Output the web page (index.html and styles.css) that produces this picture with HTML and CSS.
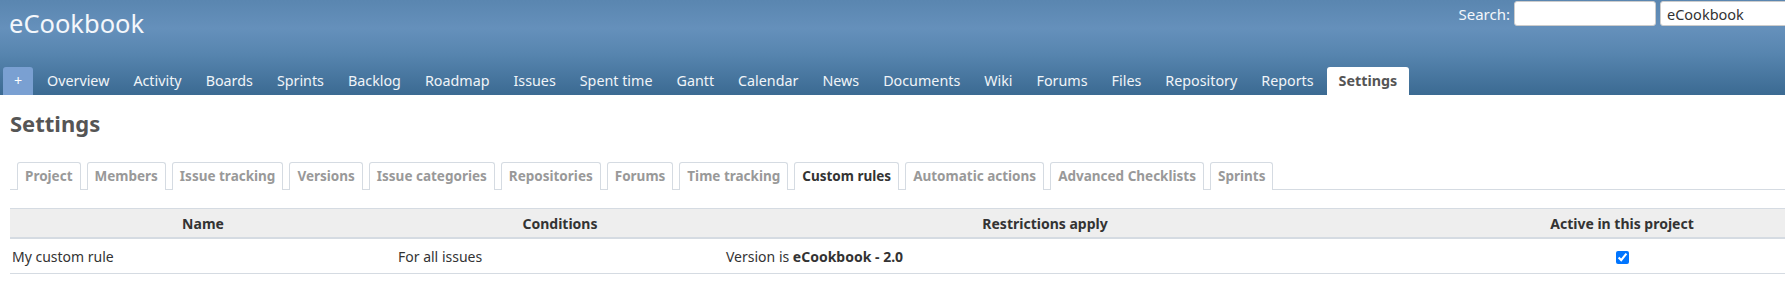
FILE: index.html
```html
<!DOCTYPE html>
<html>
<head>
<meta charset="utf-8">
<title>Settings - eCookbook</title>
<link rel="stylesheet" href="styles.css">
</head>
<body>
<div class="page">
  <header class="top">
    <div class="title-row">
      <h1 class="site-title">eCookbook</h1>
      <div class="quick-search">
        <label class="search-label" for="q">Search:</label>
        <input class="search-input" id="q" type="text">
        <select class="project-select"><option>eCookbook</option></select>
      </div>
    </div>
    <nav class="main-menu">
      <ul class="menu-list">
        <li class="menu-new">+</li>
        <li class="menu-item">Overview</li>
        <li class="menu-item">Activity</li>
        <li class="menu-item">Boards</li>
        <li class="menu-item">Sprints</li>
        <li class="menu-item">Backlog</li>
        <li class="menu-item">Roadmap</li>
        <li class="menu-item">Issues</li>
        <li class="menu-item">Spent time</li>
        <li class="menu-item">Gantt</li>
        <li class="menu-item">Calendar</li>
        <li class="menu-item">News</li>
        <li class="menu-item">Documents</li>
        <li class="menu-item">Wiki</li>
        <li class="menu-item">Forums</li>
        <li class="menu-item">Files</li>
        <li class="menu-item">Repository</li>
        <li class="menu-item">Reports</li>
        <li class="menu-item selected">Settings</li>
      </ul>
    </nav>
  </header>
  <main class="content">
    <h2 class="page-title">Settings</h2>
    <div class="tabs">
      <ul class="tab-list">
        <li class="tab">Project</li>
        <li class="tab">Members</li>
        <li class="tab">Issue tracking</li>
        <li class="tab">Versions</li>
        <li class="tab">Issue categories</li>
        <li class="tab">Repositories</li>
        <li class="tab">Forums</li>
        <li class="tab">Time tracking</li>
        <li class="tab active">Custom rules</li>
        <li class="tab">Automatic actions</li>
        <li class="tab">Advanced Checklists</li>
        <li class="tab">Sprints</li>
      </ul>
    </div>
    <table class="list">
      <colgroup>
        <col class="c-name"><col class="c-cond"><col class="c-restr"><col class="c-active">
      </colgroup>
      <thead>
        <tr><th>Name</th><th>Conditions</th><th>Restrictions apply</th><th>Active in this project</th></tr>
      </thead>
      <tbody>
        <tr>
          <td class="left">My custom rule</td>
          <td class="left">For all issues</td>
          <td class="left">Version is <strong>eCookbook - 2.0</strong></td>
          <td class="center"><input type="checkbox" checked></td>
        </tr>
      </tbody>
    </table>
  </main>
</div>
</body>
</html>
```
FILE: styles.css
```css
html { overflow: hidden; }
body {
  margin: 0;
  font-family: "Noto Sans", sans-serif;
  color: #333;
  background: #fff;
}
.page { width: 1888px; }

.top {
  height: 95px;
  display: flex;
  flex-direction: column;
  justify-content: space-between;
  background: linear-gradient(to bottom, #5a86b0 0%, #6590bb 30%, #5886b0 55%, #3b6a92 100%);
  color: #fff;
}
.title-row {
  display: flex;
  justify-content: space-between;
  align-items: flex-start;
}
.site-title {
  margin: 0;
  padding: 8px 0 0 9px;
  font-size: 25.5px;
  font-weight: normal;
  line-height: 30px;
  color: #f4f7fb;
}
.quick-search {
  display: flex;
  align-items: center;
  gap: 4px;
  padding-top: 1px;
  padding-right: 10px;
  font-size: 15px;
}
.search-label { color: #f4f7fb; }
.search-input {
  width: 142px;
  height: 25px;
  box-sizing: border-box;
  border: 1px solid #ccc;
  border-radius: 3px;
  background: #fff;
}
.project-select {
  width: 218px;
  height: 25px;
  box-sizing: border-box;
  border: 1px solid #ccc;
  border-radius: 3px;
  background: #fff;
  font-family: "Noto Sans", sans-serif;
  font-size: 14.5px;
  color: #333;
  padding-left: 6px;
  appearance: none;
}

.menu-list {
  display: flex;
  margin: 0;
  padding: 0 0 0 3px;
  list-style: none;
  font-size: 14.3px;
}
.menu-new {
  width: 30px;
  height: 28px;
  margin-right: 2px;
  line-height: 28px;
  text-align: center;
  background: #7aa0d2;
  border-radius: 3px 3px 0 0;
  color: #fff;
}
.menu-item {
  padding: 0 12px;
  height: 28px;
  line-height: 28px;
  color: #f0f4f8;
}
.menu-item.selected {
  background: #fff;
  color: #555;
  font-weight: bold;
  border-radius: 3px 3px 0 0;
  margin-left: 1px;
}

.content { padding: 0 10px; }
.page-title {
  margin: 0;
  padding-top: 14px;
  font-size: 22px;
  line-height: 28px;
  color: #555;
}
.tabs {
  margin-top: 24px;
  border-bottom: 1px solid #d5dbe2;
}
.tab-list {
  display: flex;
  gap: 6px;
  margin: 0;
  padding: 0 0 0 7px;
  list-style: none;
  font-size: 13.5px;
  font-weight: bold;
}
.tab {
  position: relative;
  top: 1px;
  padding: 0 7px;
  height: 27px;
  line-height: 27px;
  border: 1px solid #d5dbe2;
  border-bottom: 0;
  border-radius: 3px 3px 0 0;
  color: #999;
  background: #fff;
}
.tab.active { color: #333; }

.list {
  margin-top: 18px;
  width: 1868px;
  table-layout: fixed;
  border-collapse: collapse;
  font-size: 14px;
}
.c-name { width: 386px; }
.c-cond { width: 328px; }
.c-restr { width: 642px; }
.c-active { width: 512px; }
.list th {
  background: #eeeeee;
  border-top: 1px solid #d5dbe2;
  border-bottom: 2px solid #d5dbe2;
  height: 28px;
  padding: 0 4px;
  font-weight: bold;
  color: #333;
}
.list td {
  height: 34px;
  padding: 0 2px;
  border-bottom: 1px solid #d5dbe2;
  color: #333;
}
.list td.left { text-align: left; }
.list td.center { text-align: center; }
.list td input { margin: 0; vertical-align: middle; }
```
